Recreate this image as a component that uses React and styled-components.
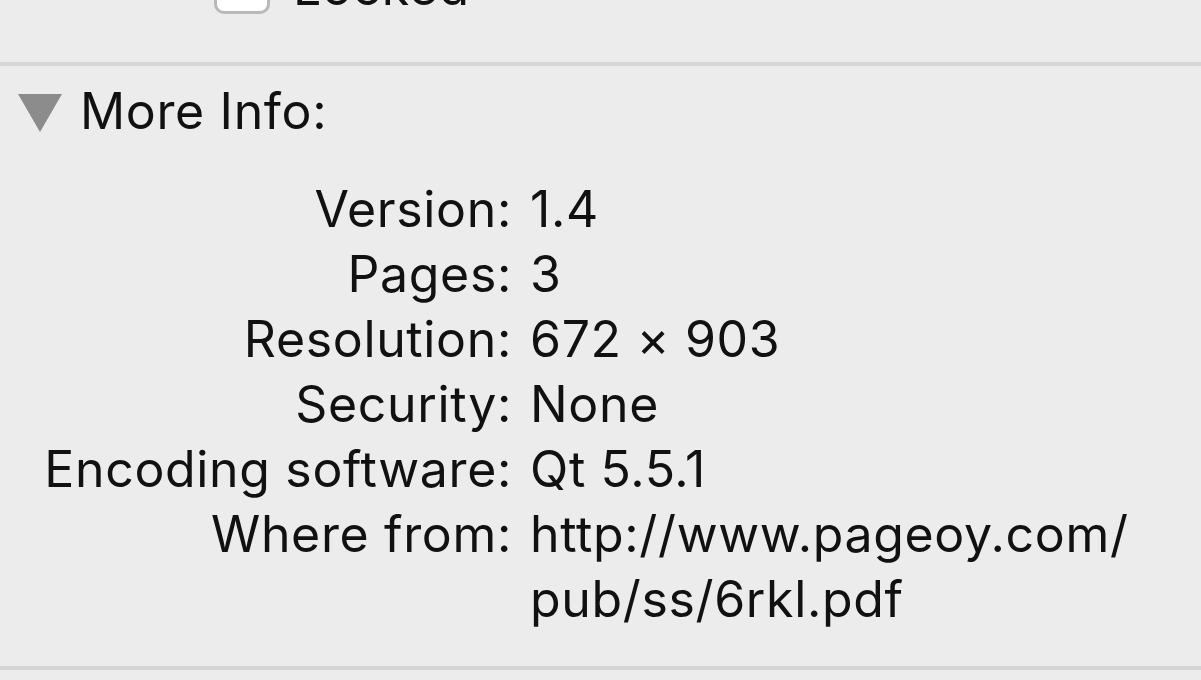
import React from "react";
import styled, { createGlobalStyle } from "styled-components";

const Global = createGlobalStyle`
  html, body { margin: 0; padding: 0; background: #ececec; }
  body { font-family: Inter, "Liberation Sans", sans-serif; color: #111; }
`;

const Panel = styled.div`
  width: 1201px;
  height: 680px;
  overflow: hidden;
  background: #ececec;
  font-size: 50px;
  line-height: 65px;
  letter-spacing: 0.65px;
`;

const TopSection = styled.div`
  display: flex;
  flex-direction: column;
  height: 62px;
  border-bottom: 4px solid #d5d5d5;
`;

const LockedRow = styled.div`
  display: flex;
  align-items: center;
  gap: 23px;
  height: 60px;
  line-height: 60px;
  margin-top: -43px;
  padding-left: 214px;
`;

const Checkbox = styled.span`
  display: block;
  box-sizing: border-box;
  width: 56px;
  height: 54px;
  background: #fff;
  border: 3px solid #b9b9b9;
  border-radius: 10px;
`;

const Header = styled.div`
  display: flex;
  align-items: center;
  gap: 18px;
  margin-top: 13px;
  padding-left: 18px;
  height: 65px;
`;

const Triangle = styled.svg`
  display: block;
  width: 44px;
  height: 38px;
  margin-top: 2px;
`;

const InfoGrid = styled.div`
  display: grid;
  grid-template-columns: 512px 1fr;
  column-gap: 18px;
  margin-top: 33px;
  padding-bottom: 34px;
  border-bottom: 4px solid #d5d5d5;
`;

const Label = styled.div`
  text-align: right;
  white-space: nowrap;
`;

const Value = styled.div`
  white-space: nowrap;
`;

const rows = [
  ["Version:", "1.4"],
  ["Pages:", "3"],
  ["Resolution:", "672 × 903"],
  ["Security:", "None"],
  ["Encoding software:", "Qt 5.5.1"],
  ["Where from:", ["http://www.pageoy.com/", "pub/ss/6rkl.pdf"]],
];

export default function App() {
  return (
    <>
      <Global />
      <Panel>
        <TopSection>
          <LockedRow>
            <Checkbox />
            <span>Locked</span>
          </LockedRow>
        </TopSection>
        <Header>
          <Triangle viewBox="0 0 44 38">
            <polygon points="0,0 44,0 22,38" fill="#8c8c8c" />
          </Triangle>
          <span>More Info:</span>
        </Header>
        <InfoGrid>
          {rows.map(([label, value]) => (
            <React.Fragment key={label}>
              <Label>{label}</Label>
              <Value>
                {Array.isArray(value)
                  ? value.map((v) => <div key={v}>{v}</div>)
                  : value}
              </Value>
            </React.Fragment>
          ))}
        </InfoGrid>
      </Panel>
    </>
  );
}
